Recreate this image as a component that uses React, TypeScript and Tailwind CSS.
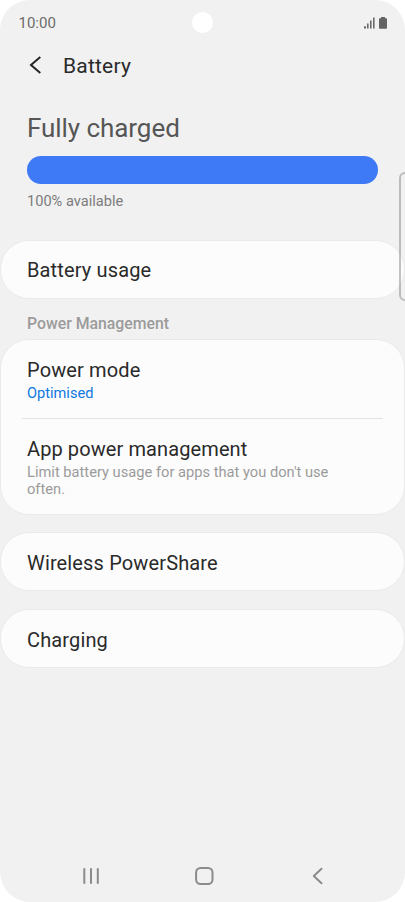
import React, { FC, ReactNode } from "react";

interface CardProps {
  children: ReactNode;
  className?: string;
}

const Card: FC<CardProps> = ({ children, className = "" }) => {
  return (
    <div
      className={`w-full bg-[#fcfcfc] border border-[#eaeaea] rounded-[29px] ${className}`}
    >
      {children}
    </div>
  );
};

interface RowProps {
  title: string;
}

const Row: FC<RowProps> = ({ title }) => {
  return (
    <button
      type="button"
      className="w-full h-[57px] px-[26px] pt-[2px] flex items-center text-[20px] tracking-[0.14px] text-[#2a2a2a]"
    >
      {title}
    </button>
  );
};

const StatusBar = () => {
  return (
    <div className="relative h-[46px] pl-[18.500px] pr-[18px] pt-px flex items-center justify-between">
      <span className="text-[15px] text-[#6b6b6b]">10:00</span>
      <div className="absolute left-[192px] top-[12px] w-[21px] h-[21px] rounded-full bg-white"></div>
      <div className="flex items-end gap-[4px] pb-px">
        <svg width="11" height="12" viewBox="0 0 11 12" fill="#6b6b6b">
          <rect x="0" y="9.300" width="2" height="2.200" />
          <rect x="3" y="6.500" width="1.600" height="5" />
          <rect x="6" y="3.500" width="1.600" height="8" />
          <rect x="9" y="0.500" width="1.600" height="11" />
        </svg>
        <svg width="8" height="12" viewBox="0 0 8 12" fill="#636363">
          <path d="M2 0h4v1.200h1.200q.8 0 .8.8v8.900q0 .8-.8.8H.8Q0 11.700 0 10.900V2q0-.8.8-.8H2z" />
        </svg>
      </div>
    </div>
  );
};

const NavigationBar = () => {
  return (
    <div className="h-[52px] pl-[82px] pr-[81px] flex items-center justify-between">
      <svg width="18" height="18" viewBox="0 0 18 18" stroke="#8b8b8b" strokeWidth="2" strokeLinecap="round">
        <path d="M2.300 2v14M9 2v14M15.800 2v14" />
      </svg>
      <svg className="-ml-[3px]" width="20" height="20" viewBox="0 0 20 20" fill="none" stroke="#8b8b8b" strokeWidth="2">
        <rect x="1.100" y="2" width="16.400" height="16" rx="4.500" />
      </svg>
      <svg width="12" height="18" viewBox="0 0 12 18" fill="none" stroke="#8b8b8b" strokeWidth="2" strokeLinecap="round" strokeLinejoin="round">
        <path d="M9.500 1.800L1.800 9l7.700 7.200" />
      </svg>
    </div>
  );
};

const App = () => {
  return (
    <div className="bg-white">
      <div className="relative w-[405px] h-[902px] overflow-hidden bg-[#f1f1f1] rounded-[30px] flex flex-col font-['Roboto',sans-serif]">
        <StatusBar />

        <header className="h-[40px] pl-[29px] flex items-center">
          <svg className="mb-[2px]" width="13" height="18" viewBox="0 0 13 18" fill="none" stroke="#252525" strokeWidth="2">
            <path d="M11.300 1L2 8.900l9.300 8" />
          </svg>
          <h1 className="pl-[21px] pt-px text-[21px] tracking-[0.2px] text-[#2a2a2a]">Battery</h1>
        </header>

        <section className="h-[153.500px] px-[27px] pt-[24px]">
          <h2 className="text-[26px] leading-[36px] tracking-[-0.06px] text-[#565656]">Fully charged</h2>
          <div className="mt-[10.400px] h-[27.400px] w-[351px] rounded-full bg-[#3f7af6]"></div>
          <p className="pt-[7.200px] text-[14.600px] leading-[20px] text-[#7c7c7c]">
            100% available
          </p>
        </section>

        <Card>
          <Row title="Battery usage" />
        </Card>

        <h3 className="h-[40.500px] px-[27px] pt-[9.500px] text-[15.800px] leading-[32px] font-medium text-[#9b9b9b]">
          Power Management
        </h3>

        <Card className="h-[176px]">
          <div className="h-[78px] px-[26px] pt-[17px]">
            <p className="text-[20px] leading-[26px] tracking-[0.14px] text-[#2a2a2a]">Power mode</p>
            <p className="text-[14.600px] leading-[20px] text-[#0d78df]">Optimised</p>
          </div>
          <hr className="mx-[21px] border-[#e2e2e2]" />
          <div className="px-[26px] pt-[17px]">
            <p className="text-[20px] leading-[26px] tracking-[0.1px] text-[#2a2a2a]">
              App power management
            </p>
            <p className="w-[320px] text-[14.680px] leading-[17px] pt-[2px] text-[#9b9b9b]">
              Limit battery usage for apps that you don't use often.
            </p>
          </div>
        </Card>

        <Card className="mt-[17px]">
          <Row title="Wireless PowerShare" />
        </Card>
        <Card className="mt-[18px]">
          <Row title="Charging" />
        </Card>

        <div className="flex-1"></div>
        <NavigationBar />

        {/* edge panel handle */}
        <div className="absolute left-[399px] top-[172px] w-[12px] h-[129px] border-2 border-[#999999]/60 rounded-[6px]"></div>
      </div>
    </div>
  );
};

export default App;
